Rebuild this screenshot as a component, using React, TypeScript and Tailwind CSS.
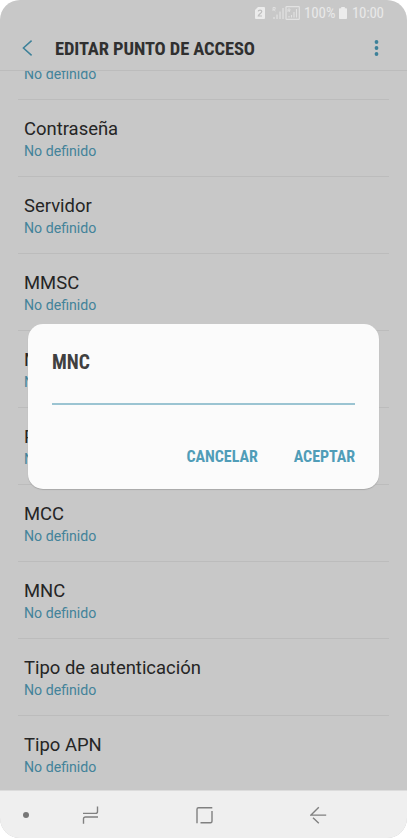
import React, { useState } from 'react';

const SETTINGS = [
  { id: 'user', label: 'Nombre de usuario' },
  { id: 'password', label: 'Contraseña' },
  { id: 'server', label: 'Servidor' },
  { id: 'mmsc', label: 'MMSC' },
  { id: 'mms-proxy', label: 'MMS Proxy' },
  { id: 'mms-port', label: 'Puerto MMS' },
  { id: 'mcc', label: 'MCC' },
  { id: 'mnc', label: 'MNC' },
  { id: 'auth', label: 'Tipo de autenticación' },
  { id: 'apn-type', label: 'Tipo APN' },
];

const StatusBar: React.FC = () => (
  <div className="flex h-[26px] items-center justify-end pr-[23px] font-['Roboto_Condensed',Roboto,sans-serif] text-[15px] leading-none text-[#e9e9e9] [font-stretch:75%]">
    <svg width="10" height="12" viewBox="0 0 10 12" className="mr-[7px]">
      <path d="M3 0H9a1 1 0 0 1 1 1V11a1 1 0 0 1-1 1H1a1 1 0 0 1-1-1V3Z" fill="#ececec" />
      <path d="M3.2 4.4C3.3 2.6 6.8 2.5 6.8 4.5C6.8 6 3.3 7.4 3.2 9H7" fill="none" stroke="#c0c0c0" strokeWidth="1.2" />
    </svg>
    {/* Signal strength of both SIM cards */}
    <svg width="28" height="14" viewBox="0 0 28 14" fill="none" stroke="#e2e2e2" className="mr-[4px]">
      <path d="M1 5V1.500H3.2V3.300H1.4L3.400 5" strokeWidth="0.9" />
      <path d="M2 13V11M5 13V8.500M8 13V5.500M11 13V2" strokeWidth="1.2" />
      <rect x="14" y="0.700" width="13.300" height="12.600" rx="0.500" strokeWidth="1.200" />
      <path d="M16 6V3H18V4.500H16.400L18 6" strokeWidth="0.8" />
      <path d="M17 11.500V10M19.500 11.500V9M22 11.500V6M24.500 11.500V3" strokeWidth="1.100" />
    </svg>
    <span className="w-[31px] whitespace-nowrap tracking-[-0.1px]">100%</span>
    <svg width="8" height="12" viewBox="0 0 8 12" className="mr-[5px] ml-[4px]">
      <path d="M2.200 0H5.800V1.300H7.200Q8 1.300 8 2.100V11.200Q8 12 7.200 12H.8Q0 12 0 11.200V2.100Q0 1.300 .8 1.300H2.200Z" fill="#ececec" />
    </svg>
    <span className="w-[32px] whitespace-nowrap tracking-[-0.3px]">10:00</span>
  </div>
);

const Header: React.FC = () => (
  <header className="flex h-[45px] items-center border-b border-[#bcbcbc] pr-[28px] pl-[22px]">
    <button aria-label="Atrás" className="w-[33px]">
      <svg width="11" height="16" viewBox="0 0 11 16" fill="none" stroke="#3d8199" strokeWidth="1.500">
        <path d="M9.600 0.600L1.400 8L9.600 15.400" />
      </svg>
    </button>
    <h1 className="flex-1 pt-[2px] font-['Roboto_Condensed',Roboto,sans-serif] text-[18.500px] leading-[22px] font-bold tracking-[-0.1px] whitespace-nowrap text-[#303030] [font-stretch:75%]">
      EDITAR PUNTO DE ACCESO
    </h1>
    <button aria-label="Más opciones">
      <svg width="5" height="16" viewBox="0 0 5 16" fill="#3d8199">
        <circle cx="2.500" cy="2" r="1.900" />
        <circle cx="2.500" cy="8" r="1.900" />
        <circle cx="2.500" cy="14" r="1.900" />
      </svg>
    </button>
  </header>
);

const App: React.FC = () => {
  const [value, setValue] = useState('');

  return (
    <div className="relative flex h-[838px] w-[407px] flex-col overflow-hidden rounded-[20px] bg-[#c8c8c8] font-[Roboto,sans-serif]">
      <StatusBar />
      <Header />

      <main className="flex-1 overflow-hidden px-[18px]">
        <ul className="-mt-[48px]">
          {SETTINGS.map(item => (
            <li key={item.id} className="h-[77px] border-b border-[#bcbcbc] px-[6px] pt-[18px] last:border-0">
              <p className="text-[18.450px] leading-[22px] text-[#252525]">{item.label}</p>
              <p className="mt-px text-[14.150px] leading-[20px] text-[#43839a]">No definido</p>
            </li>
          ))}
        </ul>
      </main>

      <nav className="flex h-[48px] shrink-0 items-center border-t border-[#dcdcdc] bg-[#efefef] pl-[23px]">
        <span className="mr-[53px] size-[6px] rounded-full bg-[#777777]" />
        <svg width="17" height="18" viewBox="0 0 17 18" fill="none" stroke="#808080" strokeWidth="1.400" className="mr-[97px]">
          <path d="M1 7.400H13.500Q15.500 7.400 15.500 5.400V0.500" />
          <path d="M16 11H3.500Q1.500 11 1.500 13V17.700" />
        </svg>
        <svg width="17" height="18" viewBox="0 0 17 18" fill="none" stroke="#808080" strokeWidth="1.400" className="mr-[97px]">
          <path d="M1 17.200V3.200Q1 1.700 2.500 1.700H16.300" />
          <path d="M16 5V15.200Q16 16.700 14.500 16.700H4.500" />
        </svg>
        <svg width="17" height="18" viewBox="0 0 17 18" fill="none" stroke="#808080" strokeWidth="1.400">
          <path d="M8.800 1.300L1 9.100H16.200M3 11.700L8.800 17.300" />
        </svg>
      </nav>

      {/* MNC dialog */}
      <div
        role="dialog"
        className="absolute top-[324px] left-[28px] flex h-[165px] w-[351px] flex-col rounded-[15px] bg-[#fbfbfb] px-[24px] font-['Roboto_Condensed',Roboto,sans-serif] font-bold shadow-[0_1px_1px_#a8a8a8] [font-stretch:75%]"
      >
        <h2 className="mt-[27px] text-[19.500px] leading-[24px] text-[#404040]">MNC</h2>
        <input
          aria-label="MNC"
          value={value}
          onChange={e => setValue(e.target.value)}
          className="mt-[4px] h-[26px] w-[303px] border-b-2 border-[#9bc4d2] outline-none"
        />
        <div className="mt-[41px] flex justify-end gap-[36px] text-[16px] leading-[22px] tracking-[-0.05px] text-[#509db8]">
          <button>CANCELAR</button>
          <button>ACEPTAR</button>
        </div>
      </div>
    </div>
  );
};

export default App;
